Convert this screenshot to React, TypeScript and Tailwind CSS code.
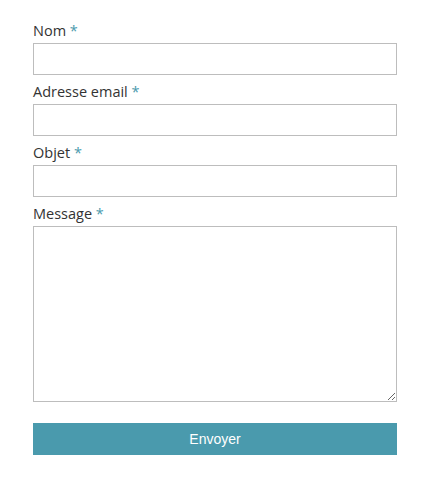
import React from "react";

const fields = [
  { label: "Nom", type: "text" },
  { label: "Adresse email", type: "email" },
  { label: "Objet", type: "text" },
];

function Label({ text }: { text: string }) {
  return (
    <label
      className="block h-[21px] pb-[4px] text-[14.5px] leading-[17px] text-[#333333]"
      style={{ fontFamily: '"Open Sans", sans-serif' }}
    >
      {text} <span className="text-[#4a9aad]">*</span>
    </label>
  );
}

export default function App() {
  return (
    <div className="w-[438px] h-[477px] bg-white pt-[22px] px-[33px]">
      <form className="w-[364px]" onSubmit={(e) => e.preventDefault()}>
        {fields.map((f) => (
          <div key={f.label} className="mb-2">
            <Label text={f.label} />
            <input
              type={f.type}
              className="block w-full h-[32px] border border-[#bdbdbd] bg-white outline-none"
            />
          </div>
        ))}
        <div>
          <Label text="Message" />
          <textarea className="block w-full h-[176px] border border-[#bdbdbd] bg-white outline-none resize-y" />
        </div>
        <button
          type="submit"
          className="mt-[21px] block w-full h-[32px] bg-[#4a9aad] text-white text-[14px]"
          style={{ fontFamily: '"Liberation Sans", Arial, sans-serif' }}
        >
          Envoyer
        </button>
      </form>
    </div>
  );
}
